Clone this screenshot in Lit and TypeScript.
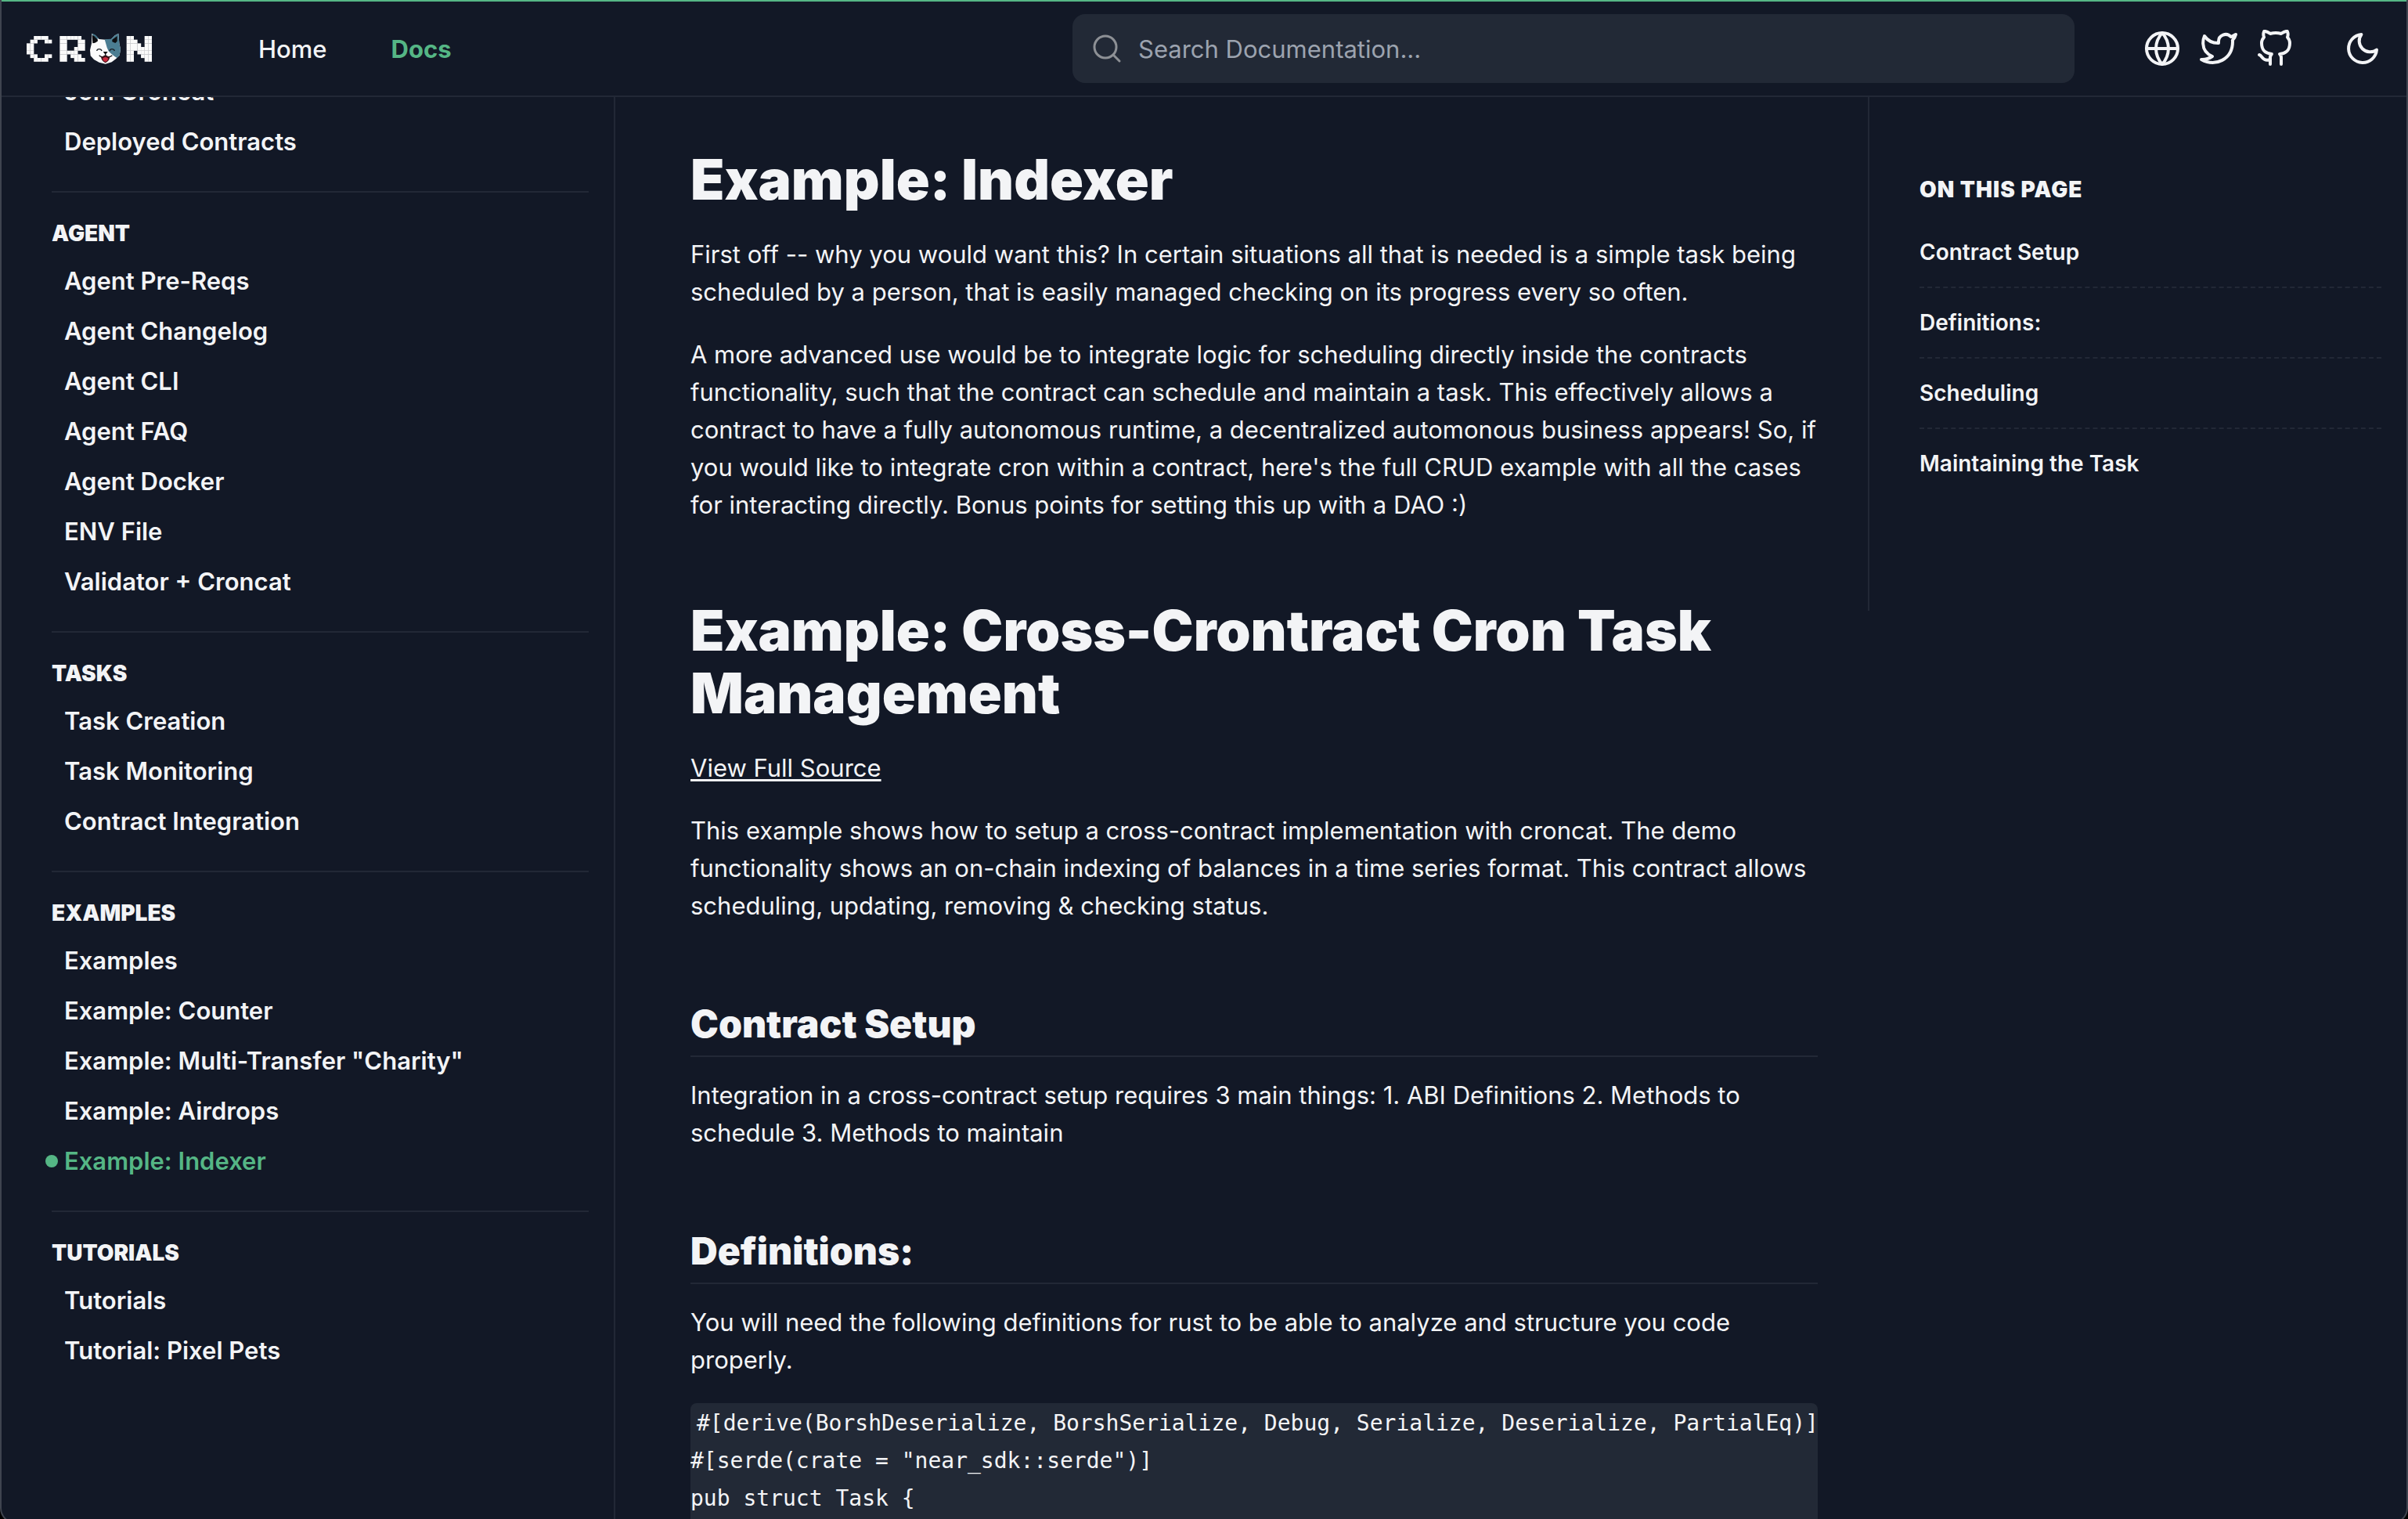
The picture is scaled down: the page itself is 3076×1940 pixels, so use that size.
import { LitElement, html, svg, css } from "lit";
import { customElement } from "lit/decorators.js";
import { classMap } from "lit/directives/class-map.js";

interface NavGroup {
  title?: string;
  items: string[];
}

const NAV: NavGroup[] = [
  { items: ["Join Croncat", "Deployed Contracts"] },
  {
    title: "Agent",
    items: [
      "Agent Pre-Reqs",
      "Agent Changelog",
      "Agent CLI",
      "Agent FAQ",
      "Agent Docker",
      "ENV File",
      "Validator + Croncat",
    ],
  },
  { title: "Tasks", items: ["Task Creation", "Task Monitoring", "Contract Integration"] },
  {
    title: "Examples",
    items: [
      "Examples",
      "Example: Counter",
      'Example: Multi-Transfer "Charity"',
      "Example: Airdrops",
      "Example: Indexer",
    ],
  },
  { title: "Tutorials", items: ["Tutorials", "Tutorial: Pixel Pets"] },
];

const CURRENT = "Example: Indexer";

const TOC = ["Contract Setup", "Definitions:", "Scheduling", "Maintaining the Task"];

const CODE = `#[derive(BorshDeserialize, BorshSerialize, Debug, Serialize, Deserialize, PartialEq)]
#[serde(crate = "near_sdk::serde")]
pub struct Task {
`;

const slug = (s: string) => "#" + s.toLowerCase().replace(/[^a-z]+/g, "-");

/* Pixel blocks of the logo: one string per row, X is a filled cell. */
const BLOCKS: { x: number; rows: string[] }[] = [
  { x: 42, rows: ["..XXXX.", ".XX..XX", "XX.....", "XX.....", "XX.....", ".XX..XX", "..XXXX."] },
  { x: 169, rows: ["XXXXXX.", "XX...XX", "XX...XX", "XX..XXX", "XXXXX..", "XX.XXX.", "XX..XXX"] },
  { x: 425, rows: ["XX...XX", "XXX..XX", "XXXX.XX", "XXXXXXX", "XX.XXXX", "XX..XXX", "XX...XX"] },
];

@customElement("cron-logo")
export class CronLogo extends LitElement {
  static styles = css`
    :host {
      display: block;
      flex: none;
    }
    .logo {
      display: block;
      width: 160px;
      height: 40px;
    }
  `;

  render() {
    return html`<svg class="logo" viewBox="42 36 480 120" role="img" aria-label="Cron">
      <g fill="#fafafa">
        ${BLOCKS.map((b) =>
          b.rows.map((row, r) =>
            [...row].map((c, i) =>
              c === "X"
                ? svg`<rect x=${b.x + i * 13.8} y=${48 + r * 14} width="14.2" height="14.4"></rect>`
                : null
            )
          )
        )}
      </g>
      <path
        d="M292 38 L306 46 L320 60 L344 62 L366 60 L380 46 L394 38 L397 76 L402 98 L398 122 L384 136 L368 148 L344 155 L320 149 L300 138 L287 124 L285 102 L291 76 Z"
        fill="#fbfbfb"
      />
      <path
        d="M341 61 L366 59 L380 46 L394 38 L397 76 L402 98 L398 122 L388 132 L376 124 L364 114 L356 106 L350 92 L346 78 Z"
        fill="#4b7d92"
      />
      <path d="M292 38 L304 43 L318 58 L308 60 L298 50 Z" fill="#3f7287" />
      <path d="M293 44 L301 49 L315 62 L314 68 L304 74 L295 76 Z" fill="#0d0d10" />
      <path d="M389 48 L389 68 L382 75 L370 70 L370 62 L380 55 Z" fill="#0d0d10" />
      <path
        d="M311 105 Q312 98 320 98 Q328 98 330 105 M360 105 Q362 98 369 98 Q377 98 379 105"
        fill="none"
        stroke="#1b2026"
        stroke-width="4"
      />
      <path d="M335 108 H353 L346 117 H342 Z" fill="#0d0d10" />
      <path
        d="M344 116 V122 M320 122 Q326 130 336 127 L344 122 L352 127 Q362 130 370 122"
        fill="none"
        stroke="#1b1b20"
        stroke-width="4"
      />
      <path d="M327 128 L344 123 L361 128 Q359 144 344 151 Q329 144 327 128 Z" fill="#3b1016" />
      <path d="M333 134 Q344 124 355 134 Q353 144 344 147 Q335 144 333 134 Z" fill="#c8283c" />
    </svg>`;
  }
}

const icon = (paths: string[], extra: unknown = null) => html`<svg
  class="icon"
  viewBox="0 0 24 24"
  aria-hidden="true"
>
  ${extra}${paths.map((d) => svg`<path d=${d}></path>`)}
</svg>`;

@customElement("app-root")
export class AppRoot extends LitElement {
  static styles = css`
    :host {
      display: block;
      height: 100vh;
      overflow: hidden;
      background: #000;
      color: #f3f4f6;
      font-family: Inter, "Liberation Sans", sans-serif;
      font-size: 31px;
      line-height: 48px;
      -webkit-font-smoothing: antialiased;
    }
    * {
      box-sizing: border-box;
    }
    a {
      color: inherit;
      text-decoration: none;
    }
    ul,
    h1,
    h2,
    h3,
    p,
    pre {
      margin: 0;
      padding: 0;
      list-style: none;
    }
    .window {
      display: flex;
      flex-direction: column;
      height: calc(100vh + 6px);
      overflow: hidden;
      background: #121826;
      border-radius: 0 0 20px 20px;
      border: solid #3f444f;
      border-width: 0 2px 2px;
    }
    .header {
      flex: none;
      display: flex;
      align-items: center;
      padding: 16px 34px;
      margin: 0 -2px;
      border-top: 2px solid #55b685;
      border-bottom: 2px solid #222836;
    }
    .nav {
      flex: 1;
      display: flex;
      gap: 82px;
      margin-left: 136px;
      padding-top: 2px;
      font-weight: 500;
    }
    .nav .active {
      color: #55b685;
      font-weight: 700;
    }
    .search {
      flex: 0 1 1280px;
      display: flex;
      align-items: center;
      gap: 20px;
      height: 88px;
      padding: 0 24px;
      border-radius: 16px;
      background: #222936;
    }
    .search-icon {
      flex: none;
      width: 40px;
      height: 40px;
      fill: none;
      stroke: #8d9095;
      stroke-width: 3;
      stroke-linecap: round;
    }
    .search-input {
      flex: 1;
      min-width: 0;
      padding: 2px 0 0;
      border: 0;
      outline: 0;
      background: none;
      color: inherit;
      font: inherit;
    }
    .search-input::placeholder {
      color: #9ca3af;
      opacity: 1;
    }
    .actions {
      display: flex;
      align-items: center;
      gap: 24px;
      margin-left: 88px;
    }
    .action {
      display: block;
      padding: 0;
      border: 0;
      background: none;
      color: inherit;
    }
    .theme {
      margin-left: 40px;
    }
    .icon {
      display: block;
      width: 48px;
      height: 48px;
      fill: none;
      stroke: currentColor;
      stroke-width: 2;
      stroke-linecap: round;
      stroke-linejoin: round;
    }
    .body {
      flex: 1;
      min-height: 0;
      display: grid;
      grid-template-columns: 784px minmax(0, 1600px) minmax(0, 1fr);
      overflow: hidden;
    }
    .sidebar {
      overflow: hidden;
      padding: 0 32px 0 64px;
      border-right: 2px solid #222836;
      font-weight: 600;
    }
    .group {
      padding: 32px 0;
      border-top: 2px solid #222836;
    }
    .group:first-child {
      margin-top: -74px;
    }
    .group-title {
      margin-bottom: 8px;
      font-size: 28px;
      line-height: 40px;
      font-weight: 900;
      text-transform: uppercase;
    }
    .group-link {
      display: flex;
      align-items: center;
      padding: 9px 16px 7px;
    }
    .group-link.current {
      color: #55b685;
    }
    .dot {
      width: 16px;
      height: 16px;
      margin: 0 8px 0 -24px;
      border-radius: 50%;
      background: #55b685;
    }
    .article {
      padding: 64px 64px 0 96px;
      overflow: hidden;
    }
    .title {
      margin-bottom: 31px;
      padding-top: 1px;
      font-size: 71px;
      line-height: 80px;
      font-weight: 900;
    }
    .text {
      margin-bottom: 31px;
      padding-top: 1px;
    }
    .text + .title,
    .text + .subtitle {
      margin-top: 95px;
    }
    .subtitle {
      margin-bottom: 24px;
      padding-bottom: 8px;
      border-bottom: 2px solid #222836;
      font-size: 48px;
      line-height: 64px;
      font-weight: 900;
    }
    .source {
      text-decoration: underline;
      text-decoration-thickness: 3px;
      text-underline-offset: 3px;
    }
    .code {
      height: 400px;
      padding-top: 2px;
      overflow: hidden;
      border-radius: 8px;
      background: #222936;
      font-family: "DejaVu Sans Mono", monospace;
      font-size: 28px;
      text-indent: 8px;
    }
    .code-text {
      font: inherit;
    }
    .toc {
      align-self: start;
      padding: 98px 32px 144px 64px;
      border-left: 2px solid #222836;
      font-size: 28px;
      line-height: 40px;
      font-weight: 600;
    }
    .toc-title {
      margin-bottom: 16px;
      font-size: 28px;
      font-weight: 900;
      letter-spacing: 1px;
      text-transform: uppercase;
    }
    .toc-item + .toc-item {
      border-top: 2px dashed #222836;
    }
    .toc-link {
      display: block;
      padding: 24px 0;
    }
  `;

  private header() {
    return html`<header class="header">
      <a href="#home" aria-label="Cron"><cron-logo></cron-logo></a>
      <nav class="nav">
        <a href="#home">Home</a>
        <a class="active" href="#docs">Docs</a>
      </nav>
      <label class="search">
        <svg class="search-icon" viewBox="0 0 40 40" aria-hidden="true">
          <circle cx="18" cy="18" r="14" />
          <path d="M28 28 L36 36" />
        </svg>
        <input
          class="search-input"
          type="search"
          placeholder="Search Documentation..."
          aria-label="Search Documentation"
        />
      </label>
      <div class="actions">
        <a class="action" href="#web" aria-label="Website"
          >${icon(
            [
              "M2 12h20",
              "M12 2a15.3 15.3 0 0 1 4 10 15.3 15.3 0 0 1-4 10 15.3 15.3 0 0 1-4-10 15.3 15.3 0 0 1 4-10z",
            ],
            svg`<circle cx="12" cy="12" r="10"></circle>`
          )}</a
        >
        <a class="action" href="#twitter" aria-label="Twitter"
          >${icon([
            "M23 3a10.9 10.9 0 0 1-3.14 1.53 4.48 4.48 0 0 0-7.86 3v1A10.66 10.66 0 0 1 3 4s-4 9 5 13a11.64 11.64 0 0 1-7 2c9 5 20 0 20-11.5a4.5 4.5 0 0 0-.08-.83A7.72 7.72 0 0 0 23 3z",
          ])}</a
        >
        <a class="action" href="#github" aria-label="GitHub"
          >${icon([
            "M9 19c-5 1.5-5-2.5-7-3m14 6v-3.87a3.37 3.37 0 0 0-.94-2.61c3.14-.35 6.44-1.54 6.44-7A5.44 5.44 0 0 0 20 4.77 5.07 5.07 0 0 0 19.91 1S18.73.65 16 2.48a13.38 13.38 0 0 0-7 0C6.27.65 5.09 1 5.09 1A5.07 5.07 0 0 0 5 4.77a5.44 5.44 0 0 0-1.5 3.78c0 5.42 3.3 6.61 6.44 7A3.37 3.37 0 0 0 9 18.13V22",
          ])}</a
        >
        <button class="action theme" type="button" aria-label="Toggle dark mode">
          ${icon(["M21 12.79A9 9 0 1 1 11.21 3 7 7 0 0 0 21 12.79z"])}
        </button>
      </div>
    </header>`;
  }

  private sidebar() {
    return html`<nav class="sidebar" aria-label="Documentation">
      ${NAV.map(
        (g) => html`<section class="group">
          ${g.title ? html`<h3 class="group-title">${g.title}</h3>` : null}
          <ul>
            ${g.items.map((item) => {
              const current = item === CURRENT;
              return html`<li>
                <a class=${classMap({ "group-link": true, current })} href=${slug(item)}
                  >${current ? html`<span class="dot"></span>` : null}${item}</a
                >
              </li>`;
            })}
          </ul>
        </section>`
      )}
    </nav>`;
  }

  private article() {
    return html`<main class="article">
      <h1 class="title">Example: Indexer</h1>
      <p class="text">
        First off -- why you would want this? In certain situations all that is needed is a simple
        task being scheduled by a person, that is easily managed checking on its progress every so
        often.
      </p>
      <p class="text">
        A more advanced use would be to integrate logic for scheduling directly inside the contracts
        functionality, such that the contract can schedule and maintain a task. This effectively
        allows a contract to have a fully autonomous runtime, a decentralized automonous business
        appears! So, if you would like to integrate cron within a contract, here's the full CRUD
        example with all the cases for interacting directly. Bonus points for setting this up with a
        DAO :)
      </p>
      <h1 class="title">Example: Cross-Crontract Cron Task Management</h1>
      <p class="text"><a class="source" href="#source">View Full Source</a></p>
      <p class="text">
        This example shows how to setup a cross-contract implementation with croncat. The demo
        functionality shows an on-chain indexing of balances in a time series format. This contract
        allows scheduling, updating, removing &amp; checking status.
      </p>
      <h2 class="subtitle">Contract Setup</h2>
      <p class="text">
        Integration in a cross-contract setup requires 3 main things: 1. ABI Definitions 2. Methods
        to schedule 3. Methods to maintain
      </p>
      <h2 class="subtitle">Definitions:</h2>
      <p class="text">
        You will need the following definitions for rust to be able to analyze and structure you
        code properly.
      </p>
      <pre class="code"><code class="code-text">${CODE}</code></pre>
    </main>`;
  }

  private toc() {
    return html`<aside class="toc">
      <h3 class="toc-title">On this page</h3>
      <ul>
        ${TOC.map(
          (t) => html`<li class="toc-item"><a class="toc-link" href=${slug(t)}>${t}</a></li>`
        )}
      </ul>
    </aside>`;
  }

  render() {
    return html`<div class="window">
      ${this.header()}
      <div class="body">${this.sidebar()}${this.article()}${this.toc()}</div>
    </div>`;
  }
}
